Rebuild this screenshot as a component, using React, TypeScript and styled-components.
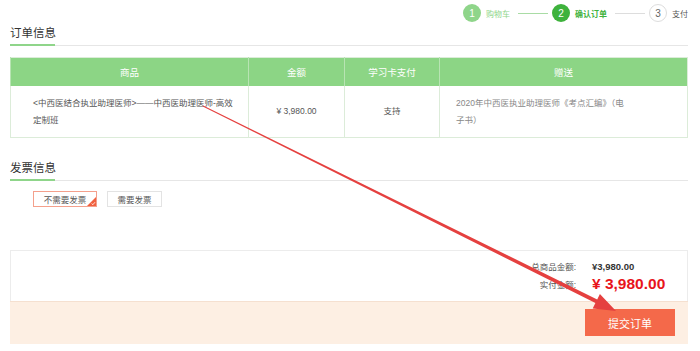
import { createGlobalStyle, styled } from "styled-components";

const GlobalStyle = createGlobalStyle`
  html, body {
    margin: 0;
    padding: 0;
    background: #ffffff;
  }
  body {
    font-family: "Liberation Sans", "Noto Sans CJK SC", sans-serif;
    color: #555;
  }
`;

const Page = styled.div`
  position: relative;
  width: 700px;
  height: 351px;
  overflow: hidden;
  box-sizing: border-box;
  padding: 0 12px 0 10px;
`;

const StepBar = styled.div`
  display: flex;
  justify-content: flex-end;
  align-items: center;
  height: 24px;
  padding-top: 2px;
  box-sizing: border-box;
`;

const Step = styled.div`
  display: flex;
  align-items: center;
  gap: 5px;
`;

const StepDot = styled.span<{ $state: "done" | "active" | "todo" }>`
  width: 18px;
  height: 18px;
  border-radius: 50%;
  box-sizing: border-box;
  display: flex;
  align-items: center;
  justify-content: center;
  font-size: 10px;
  background: ${(p) =>
    p.$state === "done" ? "#8fd58a" : p.$state === "active" ? "#3eb23c" : "#fff"};
  color: ${(p) => (p.$state === "todo" ? "#666" : "#fff")};
  border: ${(p) => (p.$state === "todo" ? "1px solid #ddd" : "none")};
`;

const StepLabel = styled.span<{ $state: "done" | "active" | "todo" }>`
  font-size: 8px;
  color: ${(p) =>
    p.$state === "done" ? "#8fd58a" : p.$state === "active" ? "#3eb23c" : "#555"};
  font-weight: ${(p) => (p.$state === "active" ? "bold" : "normal")};
`;

const StepLine = styled.span<{ $done?: boolean }>`
  width: 30px;
  height: 1px;
  margin: 0 4px 0 3px;
  background: ${(p) => (p.$done ? "#a9dca5" : "#ddd")};
`;

const SectionHead = styled.div<{ $top: number }>`
  margin-top: ${(p) => p.$top}px;
  border-bottom: 1px solid #e6e6e6;
  display: flex;
`;

const SectionTitle = styled.h3`
  margin: 0 0 -1px;
  padding-bottom: 2px;
  width: 45px;
  font-size: 11.5px;
  font-weight: normal;
  line-height: 18px;
  color: #333;
  border-bottom: 2px solid #8fd58a;
  white-space: nowrap;
`;

const Table = styled.table`
  margin-top: 11px;
  width: 678px;
  border-collapse: collapse;
  table-layout: fixed;
  border: 1px solid #dcecd9;
`;

const Th = styled.th<{ $w?: number }>`
  width: ${(p) => (p.$w ? `${p.$w}px` : "auto")};
  height: 28px;
  background: #8cd585;
  color: #fff;
  font-size: 9.5px;
  font-weight: normal;
  border-left: 1px solid #b8e4b3;
  padding: 0;
`;

const Td = styled.td<{ $align?: string; $pad?: string; $muted?: boolean }>`
  height: 51px;
  padding: ${(p) => p.$pad ?? "0"};
  text-align: ${(p) => p.$align ?? "center"};
  font-size: 8.5px;
  line-height: 17px;
  color: ${(p) => (p.$muted ? "#888" : "#555")};
  border-left: 1px solid #dcecd9;
  vertical-align: middle;
`;

const Options = styled.div`
  display: flex;
  gap: 10px;
  margin: 10px 0 0 23px;
`;

const Option = styled.button<{ $on?: boolean; $w: number }>`
  position: relative;
  width: ${(p) => p.$w}px;
  height: 16px;
  padding: 0;
  background: #fff;
  border: 1px solid ${(p) => (p.$on ? "#f4a08c" : "#e3e3e3")};
  font-family: inherit;
  font-size: 8.5px;
  color: #555;
  overflow: hidden;
`;

const Corner = styled.span`
  position: absolute;
  right: 0;
  bottom: 0;
  width: 9px;
  height: 9px;
  display: flex;
`;

const Summary = styled.div`
  margin-top: 43px;
  border: 1px solid #ececec;
  border-bottom: none;
  padding: 8px 0 6px;
`;

const SumRow = styled.div<{ $h: number }>`
  display: flex;
  justify-content: flex-end;
  align-items: center;
  height: ${(p) => p.$h}px;
  padding-right: 15px;
`;

const SumLabel = styled.span`
  font-size: 8.5px;
  color: #555;
`;

const SumValue = styled.span<{ $big?: boolean }>`
  width: 80px;
  margin-left: 16px;
  font-weight: bold;
  font-size: ${(p) => (p.$big ? "15.5px" : "9.5px")};
  color: ${(p) => (p.$big ? "#e8141b" : "#333")};
  white-space: nowrap;
`;

const Footer = styled.div`
  display: flex;
  justify-content: flex-end;
  background: #fdefe3;
  border-top: 1px solid #f5e0d0;
  padding: 7px 13px 8px 0;
`;

const SubmitButton = styled.button`
  width: 90px;
  height: 27px;
  border: none;
  background: #f4694a;
  color: #fff;
  font-family: inherit;
  font-size: 11px;
  cursor: pointer;
`;

const Overlay = styled.svg`
  position: absolute;
  left: 0;
  top: 0;
  width: 700px;
  height: 351px;
  pointer-events: none;
`;

const steps: { n: string; label: string; state: "done" | "active" | "todo" }[] = [
  { n: "1", label: "购物车", state: "done" },
  { n: "2", label: "确认订单", state: "active" },
  { n: "3", label: "支付", state: "todo" },
];

function App() {
  return (
    <Page>
      <GlobalStyle />
      <StepBar>
        {steps.map((s, i) => (
          <Step key={s.n}>
            <StepDot $state={s.state}>{s.n}</StepDot>
            <StepLabel $state={s.state}>{s.label}</StepLabel>
            {i < steps.length - 1 && <StepLine $done={i === 0} />}
          </Step>
        ))}
      </StepBar>

      <SectionHead $top={0}>
        <SectionTitle>订单信息</SectionTitle>
      </SectionHead>

      <Table>
        <thead>
          <tr>
            <Th $w={237}>商品</Th>
            <Th $w={95}>金额</Th>
            <Th $w={94}>学习卡支付</Th>
            <Th>赠送</Th>
          </tr>
        </thead>
        <tbody>
          <tr>
            <Td $align="left" $pad="0 14px 0 22px">
              &lt;中西医结合执业助理医师&gt;——中西医助理医师-高效定制班
            </Td>
            <Td>¥ 3,980.00</Td>
            <Td>支持</Td>
            <Td $align="left" $pad="0 62px 0 16px" $muted>
              2020年中西医执业助理医师《考点汇编》（电子书）
            </Td>
          </tr>
        </tbody>
      </Table>

      <SectionHead $top={21}>
        <SectionTitle>发票信息</SectionTitle>
      </SectionHead>

      <Options>
        <Option $on $w={64}>
          不需要发票
          <Corner>
            <svg width="9" height="9" viewBox="0 0 9 9">
              <path d="M9 0 L9 9 L0 9 Z" fill="#f0603f" />
              <path d="M4.6 6.6 L5.9 7.7 L8 5.2" stroke="#fff" strokeWidth="0.8" fill="none" />
            </svg>
          </Corner>
        </Option>
        <Option $w={55}>需要发票</Option>
      </Options>

      <Summary>
        <SumRow $h={14}>
          <SumLabel>总商品金额:</SumLabel>
          <SumValue>¥3,980.00</SumValue>
        </SumRow>
        <SumRow $h={22}>
          <SumLabel>实付金额:</SumLabel>
          <SumValue $big>¥ 3,980.00</SumValue>
        </SumRow>
      </Summary>
      <Footer>
        <SubmitButton>提交订单</SubmitButton>
      </Footer>

      <Overlay viewBox="0 0 700 351">
        <polygon
          points="202.8,106.4 203.2,105.6 597.2,299.4 599.9,294.0 616,311 592.7,308.4 595.4,303.0"
          fill="#e5403f"
        />
      </Overlay>
    </Page>
  );
}

export default App;
